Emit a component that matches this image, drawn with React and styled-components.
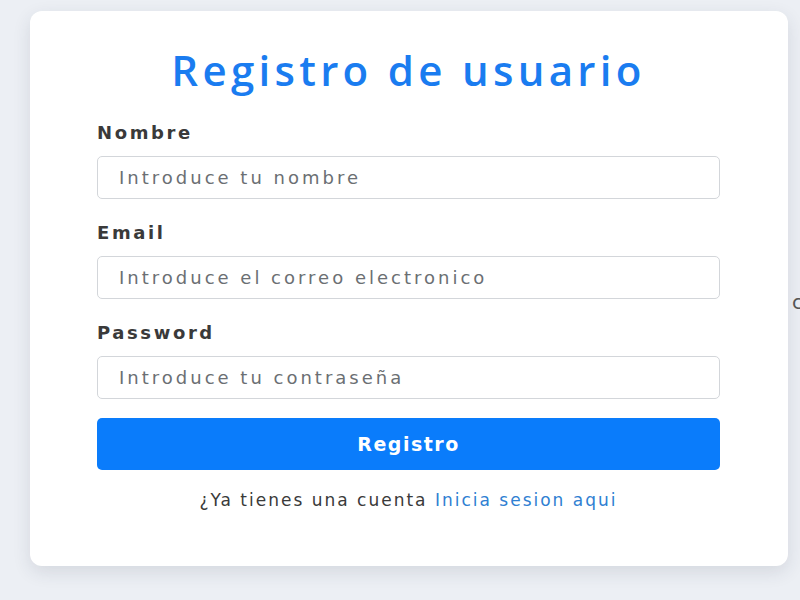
import React from 'react';
import styled, { createGlobalStyle } from 'styled-components';

const GlobalStyle = createGlobalStyle`
  html, body {
    margin: 0;
    padding: 0;
    background: #eceff4;
    font-family: "DejaVu Sans", "Open Sans", sans-serif;
    overflow: hidden;
  }
`;

const Page = styled.div`
  width: 800px;
  height: 600px;
  position: relative;
  overflow: hidden;
  padding: 11px 0 0 30px;
  box-sizing: border-box;
`;

const Card = styled.div`
  width: 758px;
  height: 555px;
  box-sizing: border-box;
  background: #ffffff;
  border-radius: 12px;
  box-shadow: 0 6px 18px rgba(40, 50, 70, 0.12);
  padding: 30px 68px 0 67px;
  display: flex;
  flex-direction: column;
`;

const Title = styled.h1`
  margin: 0;
  text-align: center;
  font-family: "Open Sans", "DejaVu Sans", sans-serif;
  font-size: 42px;
  line-height: 58px;
  font-weight: 600;
  color: #1a7cf0;
  letter-spacing: 4.3px;
`;

const Form = styled.form`
  display: flex;
  flex-direction: column;
  margin-top: 22px;
`;

const Group = styled.div`
  display: flex;
  flex-direction: column;
  margin-bottom: 22px;
`;

const Label = styled.label`
  font-size: 18px;
  line-height: 24px;
  font-weight: 700;
  color: #3a3a3a;
  letter-spacing: 2.6px;
  margin-bottom: 11px;
`;

const Input = styled.input`
  height: 43px;
  box-sizing: border-box;
  border: 1px solid #d3d6da;
  border-radius: 5px;
  padding: 0 21px;
  font-family: inherit;
  font-size: 18px;
  letter-spacing: 3px;
  color: #333;
  outline: none;

  &::placeholder {
    color: #6b6f73;
  }
`;

const Button = styled.button`
  margin-top: -3px;
  height: 52px;
  border: none;
  border-radius: 5px;
  background: #0a7cfb;
  color: #ffffff;
  font-family: inherit;
  font-size: 19px;
  font-weight: 700;
  letter-spacing: 1.5px;
  cursor: pointer;
`;

const Footer = styled.p`
  margin: 18px 0 0;
  text-align: center;
  font-size: 17px;
  line-height: 24px;
  color: #3a3a3a;
  letter-spacing: 2px;
`;

const Link = styled.a`
  color: #2f80d2;
  text-decoration: none;
`;

const EdgeGlyph = styled.span`
  position: absolute;
  left: 792px;
  top: 290px;
  font-size: 20px;
  color: #555;
`;

const fields = [
  { id: 'nombre', label: 'Nombre', type: 'text', placeholder: 'Introduce tu nombre' },
  { id: 'email', label: 'Email', type: 'email', placeholder: 'Introduce el correo electronico' },
  { id: 'password', label: 'Password', type: 'password', placeholder: 'Introduce tu contraseña' },
];

const App = () => {
  return (
    <>
      <GlobalStyle />
      <Page>
        <Card>
          <Title>Registro de usuario</Title>
          <Form onSubmit={(e) => e.preventDefault()}>
            {fields.map((f) => (
              <Group key={f.id}>
                <Label htmlFor={f.id}>{f.label}</Label>
                <Input id={f.id} type={f.type} placeholder={f.placeholder} />
              </Group>
            ))}
            <Button type="submit">Registro</Button>
          </Form>
          <Footer>
            ¿Ya tienes una cuenta <Link href="#">Inicia sesion aqui</Link>
          </Footer>
        </Card>
        <EdgeGlyph>c</EdgeGlyph>
      </Page>
    </>
  );
};

export default App;
